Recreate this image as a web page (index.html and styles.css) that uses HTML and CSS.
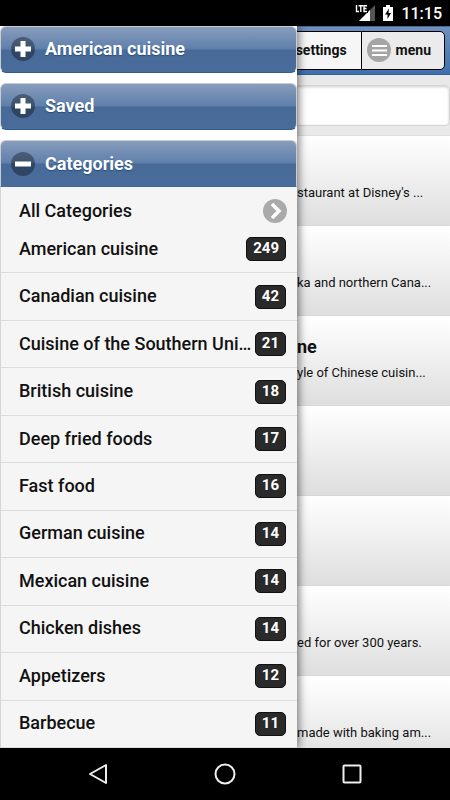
FILE: index.html
```html
<!DOCTYPE html>
<html lang="en">
<head>
<meta charset="utf-8">
<meta name="viewport" content="width=device-width, initial-scale=1">
<title>Categories</title>
<link rel="stylesheet" href="styles.css">
</head>
<body>
<div class="status">
  <svg width="20" height="16" viewBox="0 0 20 16" aria-hidden="true">
    <path d="M4 16 20 0v16z" fill="#555"/><path d="M4 16 15 5v11z" fill="#fff"/>
    <path d="M0 0h13v8H0z" fill="#000"/>
    <path d="M1.500 0v6.500H4M3.500 .700h4.500M5.800 1v6M12 .700H9v5.800h3M9 3.500h2.500" fill="none" stroke="#fff" stroke-width="1.400"/>
  </svg>
  <svg width="10" height="16" viewBox="0 0 10 16" aria-hidden="true">
    <path d="M3 0h4v2h3v14H0V2h3z" fill="#fff"/><path d="M6 3.500 2 9.500h2.500V14L8 8H5.500z" fill="#000"/>
  </svg>
  <time class="clock">11:15</time>
</div>
<div class="screen">
  <aside class="panel">
    <button type="button" class="bar"><svg class="disc" width="24" height="24" viewBox="0 0 24 24" aria-hidden="true"><circle cx="12" cy="12" r="12"/><path d="M4 12h16M12 4v16"/></svg>American cuisine</button>
    <button type="button" class="bar"><svg class="disc" width="24" height="24" viewBox="0 0 24 24" aria-hidden="true"><circle cx="12" cy="12" r="12"/><path d="M4 12h16M12 4v16"/></svg>Saved</button>
    <section class="group">
      <button type="button" class="bar open"><svg class="disc" width="24" height="24" viewBox="0 0 24 24" aria-hidden="true"><circle cx="12" cy="12" r="12"/><path d="M4 12h16"/></svg>Categories</button>
      <a class="all" href="#all">All Categories
        <svg width="24" height="24" viewBox="0 0 24 24" aria-hidden="true"><circle cx="12" cy="12" r="12" fill="#aaa"/><path d="m9 5 7 7-7 7" fill="none" stroke="#fff" stroke-width="3.500"/></svg>
      </a>
      <nav class="list">
        <a href="#1"><span>American cuisine</span><b>249</b></a>
        <a href="#2"><span>Canadian cuisine</span><b>42</b></a>
        <a href="#3"><span>Cuisine of the Southern Uni…</span><b>21</b></a>
        <a href="#4"><span>British cuisine</span><b>18</b></a>
        <a href="#5"><span>Deep fried foods</span><b>17</b></a>
        <a href="#6"><span>Fast food</span><b>16</b></a>
        <a href="#7"><span>German cuisine</span><b>14</b></a>
        <a href="#8"><span>Mexican cuisine</span><b>14</b></a>
        <a href="#9"><span>Chicken dishes</span><b>14</b></a>
        <a href="#10"><span>Appetizers</span><b>12</b></a>
        <a href="#11"><span>Barbecue</span><b>11</b></a>
      </nav>
    </section>
  </aside>
  <main class="page">
    <header class="top">
      <button type="button" class="settings">settings</button>
      <button type="button" class="menu"><svg width="24" height="24" viewBox="0 0 24 24" aria-hidden="true"><circle cx="12" cy="12" r="12" fill="#a5a5a5"/><path d="M5 8h15M5 12.500h15M5 17h15" stroke="#fff" stroke-width="2"/></svg>menu</button>
    </header>
    <div class="search"><input type="search" aria-label="Search"></div>
    <div class="results">
      <article><p>staurant at Disney's ...</p></article>
      <article><p>ka and northern Cana...</p></article>
      <article><h2>ne</h2><p>yle of Chinese cuisin...</p></article>
      <article></article>
      <article></article>
      <article><p>ed for over 300 years.</p></article>
      <article><p>made with baking am...</p></article>
    </div>
  </main>
</div>
<footer class="keys">
  <button type="button" aria-label="Back"><svg width="22" height="22" viewBox="0 0 22 22"><path d="M19 2v18L3 11z"/></svg></button>
  <button type="button" aria-label="Home"><svg width="22" height="22" viewBox="0 0 22 22"><circle cx="11" cy="11" r="9.500"/></svg></button>
  <button type="button" aria-label="Recent apps"><svg width="22" height="22" viewBox="0 0 22 22"><rect x="2.500" y="2.500" width="17" height="17" rx="1"/></svg></button>
</footer>
</body>
</html>
```
FILE: styles.css
```css
* { box-sizing: border-box; }
body {
  margin: 0;
  height: 100vh;
  display: flex;
  flex-direction: column;
  background: #000;
  color: #111;
  font-family: Roboto, "Liberation Sans", sans-serif;
  font-size: 18px;
  font-weight: 500;
}
button { font: inherit; color: inherit; border: 0; padding: 0; background: none; }
a { color: inherit; text-decoration: none; }
svg { flex: none; }
h2, p { margin: 0; }

.status {
  height: 26px;
  flex: none;
  display: flex;
  align-items: center;
  justify-content: flex-end;
  gap: 8px;
  padding-right: 8px;
  color: #fff;
  font-size: 16px;
}

.screen {
  flex: 1;
  min-height: 0;
  display: grid;
  grid-template-columns: 66% minmax(0, 1fr);
  grid-template-rows: minmax(0, 1fr);
  overflow: hidden;
}
.panel {
  display: flex;
  flex-direction: column;
  gap: 10px;
  min-height: 0;
  z-index: 1;
  background: #fff;
  box-shadow: 2px 0 8px rgba(0, 0, 0, .5);
}
.bar {
  height: 47px;
  flex: none;
  display: flex;
  align-items: center;
  gap: 10px;
  padding: 0 10px 2px;
  border: 1px solid #c9cdd0;
  border-bottom-color: #2f5f92;
  border-radius: 6px;
  background: linear-gradient(#879dbc, #5f7fab 49%, #486a98 51%, #496c9b);
  color: #fff;
  font-weight: 700;
  text-shadow: 0 1px 1px #234c7c;
}
.open { width: 100%; padding-bottom: 0; border-bottom-color: #466998; border-radius: 6px 6px 0 0; }
.disc { fill: rgba(0, 0, 0, .35); }
.disc path { fill: none; stroke: #fff; stroke-width: 5; }
.group {
  flex: 1;
  min-height: 0;
  display: flex;
  flex-direction: column;
  background: #f5f5f5;
}
.all {
  flex: none;
  height: 39px;
  display: flex;
  align-items: center;
  justify-content: space-between;
  padding: 8px 10px 0 18px;
  border-left: 1px solid #d5d5d5;
}
.list {
  flex: 1;
  min-height: 0;
  display: grid;
  grid-auto-rows: minmax(0, 1fr);
  border-left: 1px solid #d5d5d5;
}
.list a {
  display: flex;
  align-items: center;
  justify-content: space-between;
  padding: 0 11px 0 18px;
  border-bottom: 1px solid #ddd;
}
.list span { padding-bottom: 2px; }
.list b {
  height: 24px;
  padding: 0 6px;
  border: 1px solid #111;
  border-radius: 5px;
  background: #2a2a2a;
  color: #fff;
  font-size: 15px;
  line-height: 20px;
}

.page {
  min-width: 0;
  display: flex;
  flex-direction: column;
  background: #e9e9e9;
  font-size: 14px;
}
.top {
  height: 49px;
  flex: none;
  display: flex;
  padding: 4px 5px 4px 0;
  border-top: 1px solid #456a9a;
  border-bottom: 1px solid #34608f;
  background: linear-gradient(#6f91bc, #3d70ae);
}
.top button {
  margin: 0;
  display: flex;
  align-items: center;
  padding-bottom: 2px;
  border: 1px solid #000;
  background: #f6f6f6;
  font-weight: 700;
}
.top .settings { flex: 1; min-width: 0; border-left: 0; border-right: 0; justify-content: flex-end; padding-right: 14px; }
.top .menu { flex: none; gap: 5px; padding-left: 5px; padding-right: 13px; border-radius: 0 5px 5px 0; background: #ebebeb; }
.search { flex: none; padding: 10px 0; height: 61px; border-bottom: 1px solid #ddd; }
.search input {
  width: 100%;
  height: 41px;
  border: 1px solid #d5d5d5;
  border-left: 0;
  border-radius: 0 5px 5px 0;
  background: #fff;
  box-shadow: inset 0 1px 3px rgba(0, 0, 0, .2);
}
.results { flex: 1; min-height: 0; overflow: hidden; }
.results article {
  height: 90px;
  display: flex;
  flex-direction: column;
  justify-content: flex-end;
  gap: 8px;
  padding-bottom: 24px;
  border-bottom: 1px solid #d8d8d8;
  background: linear-gradient(#fff, #dedede);
}
.results h2 { font-size: 18px; line-height: 20px; }
.results p { font-size: 13px; font-weight: 400; line-height: 16px; white-space: nowrap; }

.keys {
  height: 52px;
  flex: none;
  display: flex;
  align-items: center;
  justify-content: center;
  gap: 105px;
}
.keys button { display: flex; }
.keys svg { fill: none; stroke: #eee; stroke-width: 2; stroke-linejoin: round; }
```
